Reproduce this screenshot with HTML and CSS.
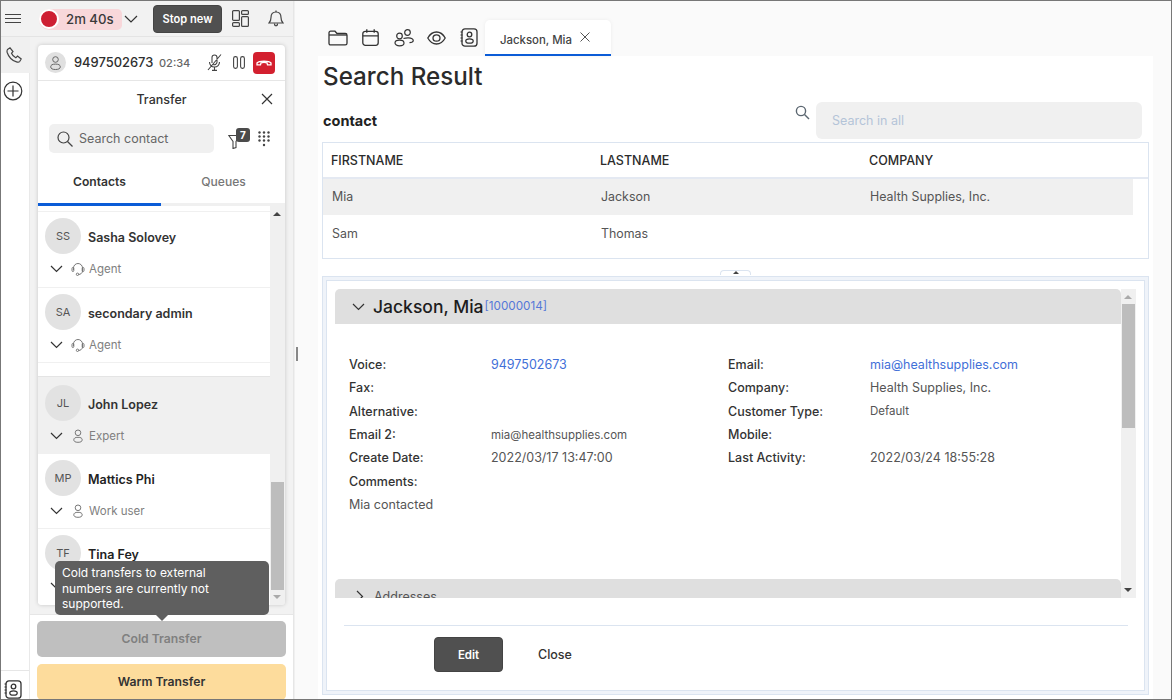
FILE: index.html
```html
<!DOCTYPE html>
<html lang="en">
<head>
<meta charset="utf-8">
<title>Transfer</title>
<link rel="stylesheet" href="styles.css">
</head>
<body>
<div class="app">
  <aside class="left">
    <header class="topbar">
      <svg class="ic-menu" width="16" height="9" viewBox="0 0 16 9"><path d="M0 .5h16M0 4.500h16M0 8.500h16" stroke="#444" fill="none"/></svg>
      <div class="timer"><span class="dot"></span><span class="timer-text">2m 40s</span></div>
      <svg class="ic-chev-top" width="14" height="8" viewBox="0 0 14 8"><path d="M1 1l6 6 6-6" stroke="#333" stroke-width="1.200" fill="none"/></svg>
      <button class="stop">Stop new</button>
      <svg class="ic-layout" width="17" height="17" viewBox="0 0 17 17" fill="none" stroke="#444" stroke-width="1.200"><rect x=".6" y=".6" width="6.800" height="9.800" rx="1"/><rect x=".6" y="12.600" width="6.800" height="3.800" rx="1"/><rect x="9.600" y=".6" width="6.800" height="3.800" rx="1"/><rect x="9.600" y="6.600" width="6.800" height="9.800" rx="1"/></svg>
      <svg class="ic-bell" width="16" height="17" viewBox="0 0 16 17" fill="none" stroke="#444" stroke-width="1.200"><path d="M1 13c1.500-1.500 2-2.500 2-5.500C3 4 5 2 8 2s5 2 5 5.500c0 3 .5 4 2 5.500z"/><path d="M6.500 13.500c0 3 3 3 3 0M8 .5v1.500"/></svg>
    </header>
    <div class="left-body">
      <nav class="rail">
        <div class="rail-phone"><svg width="16" height="16" viewBox="0 0 16 16" fill="none" stroke="#444" stroke-width="1.200"><path d="M1.500 2.500L4 .8l3 3.700-1.500 1.800c.7 1.800 2.200 3.500 4.300 4.500L11.500 9l3.700 3-1.500 2.500c-.6.800-2 .8-3.200.4C6 13.500 2.500 9.500 1.200 5.500c-.3-1.200-.2-2.300.3-3z"/></svg></div>
        <svg class="rail-plus" width="20" height="20" viewBox="0 0 20 20" fill="none" stroke="#333" stroke-width="1.200"><circle cx="10" cy="10" r="8.800"/><path d="M10 4.500v11M4.500 10h11"/></svg>
        <div class="rail-bottom"><svg width="18" height="19" viewBox="0 0 18 19" fill="none" stroke="#333" stroke-width="1.300"><rect x="2" y=".8" width="15" height="17.400" rx="3"/><circle cx="9.500" cy="6.500" r="2.300"/><ellipse cx="9.500" cy="13" rx="3.700" ry="2.200"/><path d="M.5 4h2M.5 7h2M.5 10h2M.5 13h2" stroke-width="1"/></svg></div>
      </nav>
      <section class="panel">
        <div class="card">
          <div class="call">
            <span class="call-avatar"><svg width="11" height="14" viewBox="0 0 11 14" fill="none" stroke="#666" stroke-width="1"><circle cx="5.500" cy="3.500" r="2.800"/><ellipse cx="5.500" cy="10.800" rx="4.800" ry="2.700"/></svg></span>
            <span class="call-num">9497502673</span>
            <span class="call-time">02:34</span>
            <svg class="ic-mic" width="15" height="17" viewBox="0 0 15 17" fill="none" stroke="#444" stroke-width="1.100"><path d="M5 9V3.500a2.500 2.500 0 0 1 5 0V8c0 2-2 3.200-3.800 2.500M2.500 8c0 3 2 5 5 5s5-2 5-5M7.500 13v3M5 16.400h5M14 .5L1 16"/></svg>
            <svg class="ic-pause" width="12" height="13" viewBox="0 0 12 13" fill="none" stroke="#444" stroke-width="1.100"><rect x=".6" y=".6" width="3.800" height="11.800" rx="1.800"/><rect x="7.600" y=".6" width="3.800" height="11.800" rx="1.800"/></svg>
            <button class="hangup"><svg width="16" height="7" viewBox="0 0 16 7" fill="none" stroke="#fff" stroke-width="1.300"><path d="M1 5.800V4C3 1.500 13 1.500 15 4v1.800h-3.500L11 3.800c-2-.5-4-.5-6 0l-.5 2z"/></svg></button>
          </div>
          <div class="transfer-head">
            <span class="transfer-title">Transfer</span>
            <svg class="ic-close" width="12" height="12" viewBox="0 0 12 12"><path d="M1 1l10 10M11 1L1 11" stroke="#333" stroke-width="1.200"/></svg>
          </div>
          <div class="search-row">
            <div class="search-contact">
              <svg width="16" height="16" viewBox="0 0 16 16" fill="none" stroke="#444" stroke-width="1.200"><circle cx="6.500" cy="6.500" r="5.500"/><path d="M10.500 10.500l5 5"/></svg>
              <span>Search contact</span>
            </div>
            <div class="filter">
              <svg width="15" height="15" viewBox="0 0 15 15" fill="none" stroke="#444" stroke-width="1.100"><path d="M.8 1.500h11L8 7.500v6l-3 1V7.500z"/></svg>
              <span class="badge">7</span>
            </div>
            <svg class="ic-dial" width="12" height="16" viewBox="0 0 12 16" fill="#444"><circle cx="1.500" cy="1.500" r="1.200"/><circle cx="6" cy="1.500" r="1.200"/><circle cx="10.500" cy="1.500" r="1.200"/><circle cx="1.500" cy="5.500" r="1.200"/><circle cx="6" cy="5.500" r="1.200"/><circle cx="10.500" cy="5.500" r="1.200"/><circle cx="1.500" cy="9.500" r="1.200"/><circle cx="6" cy="9.500" r="1.200"/><circle cx="10.500" cy="9.500" r="1.200"/><circle cx="6" cy="14" r="1.200"/></svg>
          </div>
          <div class="tabs">
            <div class="tab tab-on">Contacts</div>
            <div class="tab">Queues</div>
          </div>
          <div class="list-wrap">
            <div class="list">
              <div class="item"><div class="item-top"><span class="avatar">SS</span><span class="name">Sasha Solovey</span></div><div class="item-sub"><svg class="chev" width="13" height="8" viewBox="0 0 13 8"><path d="M1 1l5.500 5.500L12 1" stroke="#333" stroke-width="1.200" fill="none"/></svg><svg class="role" width="14" height="14" viewBox="0 0 14 14" fill="none" stroke="#777"><path d="M2.500 8V6a4.500 4.500 0 0 1 9 0v3c0 2-2 3.500-4 3.500"/><rect x="1" y="5.500" width="1.800" height="4" rx=".9"/><rect x="11.200" y="5.500" width="1.800" height="4" rx=".9"/><circle cx="6.500" cy="12.300" r="1.200"/></svg><span>Agent</span></div></div>
              <div class="item"><div class="item-top"><span class="avatar">SA</span><span class="name">secondary admin</span></div><div class="item-sub"><svg class="chev" width="13" height="8" viewBox="0 0 13 8"><path d="M1 1l5.500 5.500L12 1" stroke="#333" stroke-width="1.200" fill="none"/></svg><svg class="role" width="14" height="14" viewBox="0 0 14 14" fill="none" stroke="#777"><path d="M2.500 8V6a4.500 4.500 0 0 1 9 0v3c0 2-2 3.500-4 3.500"/><rect x="1" y="5.500" width="1.800" height="4" rx=".9"/><rect x="11.200" y="5.500" width="1.800" height="4" rx=".9"/><circle cx="6.500" cy="12.300" r="1.200"/></svg><span>Agent</span></div></div>
              <div class="list-gap"></div>
              <div class="item item-hover"><div class="item-top"><span class="avatar">JL</span><span class="name">John Lopez</span></div><div class="item-sub"><svg class="chev" width="13" height="8" viewBox="0 0 13 8"><path d="M1 1l5.500 5.500L12 1" stroke="#333" stroke-width="1.200" fill="none"/></svg><svg class="role" width="14" height="14" viewBox="0 0 14 14" fill="none" stroke="#777"><circle cx="7" cy="3.800" r="2.800"/><ellipse cx="7" cy="10.800" rx="4.200" ry="2.500"/></svg><span>Expert</span></div></div>
              <div class="item"><div class="item-top"><span class="avatar">MP</span><span class="name name-dark">Mattics Phi</span></div><div class="item-sub"><svg class="chev" width="13" height="8" viewBox="0 0 13 8"><path d="M1 1l5.500 5.500L12 1" stroke="#333" stroke-width="1.200" fill="none"/></svg><svg class="role" width="14" height="14" viewBox="0 0 14 14" fill="none" stroke="#777"><circle cx="7" cy="3.800" r="2.800"/><ellipse cx="7" cy="10.800" rx="4.200" ry="2.500"/></svg><span>Work user</span></div></div>
              <div class="item"><div class="item-top"><span class="avatar">TF</span><span class="name name-dark">Tina Fey</span></div><div class="item-sub"><svg class="chev" width="13" height="8" viewBox="0 0 13 8"><path d="M1 1l5.500 5.500L12 1" stroke="#333" stroke-width="1.200" fill="none"/></svg></div></div>
            </div>
            <div class="scroll list-scroll">
              <span class="arrow-up"></span>
              <span class="thumb thumb-list"></span>
              <span class="arrow-down arrow-dim"></span>
            </div>
          </div>
        </div>
        <div class="actions">
          <div class="tooltip">Cold transfers to external numbers are currently not supported.</div>
          <button class="btn-cold">Cold Transfer</button>
          <button class="btn-warm">Warm Transfer</button>
        </div>
      </section>
    </div>
    <span class="grip"></span>
  </aside>
  <main class="main">
    <div class="tabbar">
      <svg class="tb tb-folder" width="20" height="16" viewBox="0 0 20 16" fill="none" stroke="#333" stroke-width="1.300"><path d="M1 3c0-1 .7-1.800 1.700-1.800h4.300l2 2.300h8.300c1 0 1.700.7 1.700 1.700v8c0 1-.7 1.700-1.700 1.700H2.700C1.700 15 1 14.300 1 13.300z"/><path d="M1 5h18"/></svg>
      <svg class="tb tb-cal" width="17" height="17" viewBox="0 0 17 17" fill="none" stroke="#333" stroke-width="1.300"><rect x=".8" y="2.300" width="15.400" height="14" rx="2.500"/><path d="M.8 6.800h15.400M4.800 .3v3.500M12.200 .3v3.500"/></svg>
      <svg class="tb tb-people" width="20" height="18" viewBox="0 0 20 18" fill="none" stroke="#333" stroke-width="1.200"><circle cx="5.500" cy="7" r="2.800"/><ellipse cx="5.500" cy="14" rx="4.500" ry="2.800"/><circle cx="13.500" cy="3.500" r="2.800"/><path d="M9.500 9.500c1.500-.5 3-.8 5-.7 3 .2 5 1.500 4.700 3-.2 1-1.700 1.700-3.700 1.800"/></svg>
      <svg class="tb tb-eye" width="19" height="14" viewBox="0 0 19 14" fill="none" stroke="#333" stroke-width="1.300"><path d="M.8 7C3 3 6 1 9.500 1s6.500 2 8.700 6c-2.200 4-5.200 6-8.700 6S3 11 .8 7z"/><ellipse cx="9.500" cy="7" rx="3.500" ry="3.200"/></svg>
      <svg class="tb tb-book" width="18" height="19" viewBox="0 0 18 19" fill="none" stroke="#333" stroke-width="1.300"><rect x="2" y=".8" width="15" height="17.400" rx="3"/><circle cx="9.500" cy="6.500" r="2.300"/><ellipse cx="9.500" cy="13" rx="3.700" ry="2.200"/><path d="M.5 4h2M.5 7h2M.5 10h2M.5 13h2" stroke-width="1"/></svg>
      <div class="doc-tab"><span>Jackson, Mia</span><svg width="10" height="10" viewBox="0 0 10 10"><path d="M.5.500l9 9M9.500.500l-9 9" stroke="#555"/></svg></div>
    </div>
    <div class="content">
      <h1 class="title">Search Result</h1>
      <div class="contact-row">
        <h2 class="contact-label">contact</h2>
        <svg class="ic-search" width="15" height="15" viewBox="0 0 15 15" fill="none" stroke="#5b6670" stroke-width="1.400"><circle cx="6" cy="6" r="4.600"/><path d="M9.500 9.500l4.500 4.500"/></svg>
        <div class="search-all">Search in all</div>
      </div>
      <div class="table">
        <div class="thead"><span>FIRSTNAME</span><span>LASTNAME</span><span>COMPANY</span></div>
        <div class="trow trow-on"><span>Mia</span><span>Jackson</span><span>Health Supplies, Inc.</span></div>
        <div class="trow"><span>Sam</span><span>Thomas</span><span></span></div>
      </div>
      <div class="splitter"><span class="split-handle"><i></i></span></div>
      <div class="detail-outer">
        <div class="detail-inner">
          <div class="detail-scrollwrap">
            <div class="detail-body">
              <div class="sec-head">
                <svg width="13" height="8" viewBox="0 0 13 8"><path d="M1 1l5.500 5.500L12 1" stroke="#333" stroke-width="1.200" fill="none"/></svg>
                <span class="sec-name">Jackson, Mia</span><span class="sec-id">[10000014]</span>
              </div>
              <div class="fields">
                <b>Voice:</b><a class="link">9497502673</a><b>Email:</b><a class="link">mia@healthsupplies.com</a>
                <b>Fax:</b><span></span><b>Company:</b><span>Health Supplies, Inc.</span>
                <b>Alternative:</b><span></span><b>Customer Type:</b><span class="small">Default</span>
                <b>Email 2:</b><span class="small">mia@healthsupplies.com</span><b>Mobile:</b><span></span>
                <b>Create Date:</b><span>2022/03/17 13:47:00</span><b>Last Activity:</b><span>2022/03/24 18:55:28</span>
                <b>Comments:</b><span></span><span></span><span></span>
                <span class="comment">Mia contacted</span>
              </div>
              <div class="sec-sub">
                <svg width="8" height="13" viewBox="0 0 8 13"><path d="M1 1l5.500 5.500L1 12" stroke="#333" stroke-width="1.200" fill="none"/></svg>
                <span>Addresses</span>
              </div>
            </div>
            <div class="scroll detail-scroll">
              <span class="arrow-up arrow-dim"></span>
              <span class="thumb thumb-detail"></span>
              <span class="arrow-down"></span>
            </div>
          </div>
          <div class="footer">
            <button class="btn-edit">Edit</button>
            <button class="btn-close">Close</button>
          </div>
        </div>
      </div>
    </div>
  </main>
</div>
</body>
</html>
```
FILE: styles.css
```css
* { box-sizing: border-box; }
html, body { margin: 0; padding: 0; }
body { width: 1172px; height: 700px; overflow: hidden; font-family: Inter, "Liberation Sans", sans-serif; color: #333; }
button { font-family: inherit; border: 0; padding: 0; }
h1, h2 { margin: 0; }
svg { display: block; flex: none; }

.app { display: flex; width: 1172px; height: 700px; border: 1px solid #777; background: #fafafa; overflow: hidden; }

.left { position: relative; width: 293px; flex: none; display: flex; flex-direction: column; border-right: 1px solid #e6e6e6; }
.topbar { height: 36px; flex: none; display: flex; align-items: center; background: #f2f2f2; border-bottom: 1px solid #e4e4e4; padding-left: 4px; }
.ic-menu { margin-top: -1px; }
.timer { display: flex; align-items: center; margin-left: 18px; width: 83px; height: 21px; border-radius: 11px 5px 5px 11px; background: #f8d7da; margin-top: 1px; }
.dot { width: 20px; height: 20px; border-radius: 50%; background: #ce1f33; border: 2.500px solid #fff; flex: none; }
.timer-text { margin-left: 7px; font-size: 13.200px; font-weight: 500; color: #3a3a3a; }
.ic-chev-top { margin-left: 2px; }
.stop { margin-left: 15px; width: 69px; height: 28px; background: #505050; color: #fff; font-size: 11.100px; font-weight: 600; border-radius: 4px; border: 1px solid #444; }
.ic-layout { margin-left: 10px; }
.ic-bell { margin-left: 19px; }

.left-body { flex: 1; display: flex; min-height: 0; }
.rail { width: 29px; flex: none; background: #fff; display: flex; flex-direction: column; border-right: 1px solid #e9e9e9; }
.rail-phone { height: 36px; background: #f0f0f0; display: flex; align-items: center; justify-content: center; margin-right: -1px; padding-right: 3px; }
.rail-plus { margin: 8px 0 0 2px; }
.rail-bottom { margin-top: auto; height: 29px; border-top: 1px solid #e6e6e6; padding: 9px 0 0 3px; }

.panel { flex: 1; min-width: 0; display: flex; flex-direction: column; background: #f2f2f2; }
.card { width: 247px; height: 560px; flex: none; margin: 8px 0 0 8px; background: #fff; border-radius: 4px; box-shadow: 0 0 4px rgba(0,0,0,.18); display: flex; flex-direction: column; overflow: hidden; }
.call { height: 36px; flex: none; display: flex; align-items: center; border-bottom: 1px solid #e6e6e6; padding-left: 7px; }
.call-avatar { width: 21px; height: 21px; border-radius: 50%; background: #e0e0e0; display: flex; align-items: center; justify-content: center; flex: none; }
.call-num { margin-left: 8px; font-size: 12.900px; font-weight: 500; color: #2f2f2f; width: 78px; white-space: nowrap; }
.call-time { margin-left: 7px; font-size: 11px; font-weight: 500; color: #666; width: 31px; }
.ic-mic { margin-left: 17px; }
.ic-pause { margin-left: 11px; }
.hangup { margin-left: 8px; width: 22px; height: 22px; background: #d3202f; border-radius: 4px; display: flex; align-items: center; justify-content: center; }
.transfer-head { height: 36px; flex: none; position: relative; display: flex; align-items: center; justify-content: center; }
.transfer-title { font-size: 12.500px; font-weight: 500; color: #333; }
.ic-close { position: absolute; right: 12px; top: 12px; }
.search-row { flex: none; display: flex; align-items: center; height: 29px; margin-top: 7px; padding-left: 11px; }
.search-contact { width: 165px; height: 29px; background: #f0f0f0; border-radius: 5px; display: flex; align-items: center; padding-left: 8px; gap: 6px; font-size: 12.500px; color: #666; }
.filter { position: relative; margin-left: 14px; width: 24px; height: 24px; padding-top: 7px; }
.badge { position: absolute; left: 8px; top: 1px; width: 14px; height: 14px; background: #4b4b4b; color: #fff; border-radius: 3px; font-size: 10px; font-weight: 700; text-align: center; line-height: 14px; }
.ic-dial { margin-left: 6px; }
.tabs { flex: none; display: flex; height: 46px; margin-top: 7px; background: linear-gradient(#fff 43px, #f0f0f0 43px); }
.tab { width: 123px; height: 46px; display: flex; align-items: center; justify-content: center; font-size: 12.100px; font-weight: 500; color: #777; padding-bottom: 4px; }
.tab:last-child { padding-left: 2px; }
.tab-on { color: #333; font-weight: 600; border-bottom: 3px solid #0b5cd7; padding-bottom: 1px; }
.list-wrap { flex: 1; min-height: 0; display: flex; background: #f0f0f0; }
.list { width: 232px; flex: none; overflow: hidden; background: #fff; border-top: 5px solid #fff; }
.item { height: 76px; background: #fff; border-top: 1px solid #f0f0f0; padding: 6px 0 0 7px; }
.item + .item { height: 75px; }
.item-top { display: flex; align-items: center; height: 36px; }
.avatar { width: 36px; height: 36px; border-radius: 50%; background: #e2e2e2; display: flex; align-items: center; justify-content: center; font-size: 11px; color: #555; flex: none; padding-bottom: 1px; }
.name { margin-left: 7px; padding-top: 2px; font-size: 12.500px; font-weight: 600; color: #333; }
.name-dark { color: #222; }
.item-sub { display: flex; align-items: center; height: 14px; margin-top: 8px; padding-left: 5px; font-size: 11.500px; color: #808080; }
.role { margin-left: 8px; margin-right: 4px; }
.list-gap { height: 14px; background: #fff; border-top: 1px solid #f0f0f0; }
.list-gap + .item { background: #f0f0f0; height: 77px; padding-top: 8px; border-top: 1px solid #e4e4e4; }
.scroll { position: relative; background: #f0f0f0; }
.list-scroll { flex: 1; }
.arrow-up, .arrow-down { position: absolute; left: 3px; width: 0; height: 0; border-left: 4px solid transparent; border-right: 4px solid transparent; }
.arrow-up { top: 6px; border-bottom: 4px solid #444; }
.arrow-down { bottom: 6px; border-top: 4px solid #444; }
.arrow-dim.arrow-up { border-bottom-color: #aaa; }
.arrow-dim.arrow-down { border-top-color: #aaa; }
.thumb { position: absolute; left: 1px; right: 1px; background: #bdbdbd; }
.thumb-list { top: 276px; height: 108px; }

.actions { flex: 1; min-height: 0; position: relative; margin-top: 9px; background: #fff; border-top: 1px solid #e6e6e6; padding: 6px 7px 0 7px; }
.tooltip { position: absolute; left: 25px; top: -54px; width: 214px; height: 54px; padding: 4px 40px 0 7px; background: #5f5f5f; color: #fff; border-radius: 5px; font-size: 12px; line-height: 15.500px; }
.tooltip::after { content: ""; position: absolute; left: 101px; bottom: -6px; border-left: 6px solid transparent; border-right: 6px solid transparent; border-top: 6px solid #5f5f5f; }
.btn-cold, .btn-warm { display: block; width: 249px; border-radius: 5px; font-size: 12.200px; font-weight: 600; padding-bottom: 2px; }
.btn-cold { height: 36px; background: #bfbfbf; color: #808080; }
.btn-warm { height: 36px; margin-top: 7px; background: #fddc9c; color: #333; }
.grip { position: absolute; left: 295px; top: 346px; width: 2px; height: 14px; background: #888; }

.main { flex: 1; min-width: 0; display: flex; flex-direction: column; padding: 19px 18px 0 23px; border-left: 1px solid #f0f0f0; }
.tabbar { height: 36px; flex: none; display: flex; align-items: center; padding-left: 10px; position: relative; z-index: 1; }
.tb-folder { margin-top: -1px; }
.tb-cal { margin-left: 14px; margin-top: -1px; }
.tb-people { margin-left: 15px; margin-top: -1px; }
.tb-eye { margin-left: 13px; margin-top: -1px; }
.tb-book { margin-left: 14px; margin-top: -2px; }
.doc-tab { margin-left: 7px; width: 126px; height: 36px; background: #fff; border-radius: 5px 5px 0 0; border-bottom: 2px solid #0b5cd7; box-shadow: 0 0 4px rgba(0,0,0,.06); display: flex; align-items: center; padding: 6px 0 0 15px; font-size: 11.400px; font-weight: 500; color: #444; }
.doc-tab svg { margin: -7px 0 0 8px; }
.content { flex: 1; min-height: 0; background: #fff; padding: 0 4px; }
.title { font-size: 24.200px; font-weight: 500; line-height: 42px; color: #2b2b2b; height: 46px; padding-left: 1px; }
.contact-row { display: flex; align-items: center; height: 37px; }
.contact-label { font-size: 14.500px; font-weight: 700; color: #222; padding-left: 1px; }
.ic-search { margin-left: auto; margin-right: 6px; margin-top: -17px; }
.search-all { width: 326px; height: 37px; background: #f0f0f0; border-radius: 6px; margin-right: 7px; padding: 11px 16px; font-size: 12.500px; color: #b4c4d8; }
.table { height: 117px; margin-top: 3px; border: 1px solid #dbe4f0; }
.thead, .trow { display: grid; grid-template-columns: 269px 269px 1fr; align-items: center; }
.thead { height: 36px; border-bottom: 2px solid #e4e9f2; padding-left: 8px; font-size: 12.500px; font-weight: 500; color: #2b2b2b; }
.trow { height: 36px; width: 810px; padding-left: 9px; font-size: 12.400px; color: #555; }
.trow-on { background: #f0f0f0; padding-bottom: 1px; }
.splitter { height: 17px; position: relative; }
.split-handle { position: absolute; left: 398px; top: 11px; width: 31px; height: 5px; border: 1px solid #dbe4f0; border-bottom: 0; border-radius: 4px 4px 0 0; background: #fff; }
.split-handle i { position: absolute; left: 12px; top: 0; border-left: 3px solid transparent; border-right: 3px solid transparent; border-bottom: 3px solid #444; }
.detail-outer { height: 419px; border: 1px solid #dbe4f0; padding: 3px; background: #eff3f9; }
.detail-inner { height: 100%; background: #fff; border: 1px solid #dbe4f0; padding: 8px 0 0 8px; }
.detail-scrollwrap { display: flex; height: 309px; width: 801px; }
.detail-body { width: 786px; flex: none; overflow: hidden; }
.sec-head { height: 35px; background: #dfdfdf; border-radius: 5px 5px 0 0; display: flex; align-items: center; padding-left: 17px; }
.sec-name { margin-left: 8px; font-size: 17.500px; font-weight: 500; color: #1d1d1d; }
.sec-id { margin-left: 1px; font-size: 11.700px; color: #5578d8; margin-top: -2px; }
.fields { display: grid; grid-template-columns: 142px 237px 142px 1fr; grid-auto-rows: 23.300px; align-items: center; padding: 29px 0 0 14px; height: 255px; font-size: 12.500px; color: #555; }
.fields b { font-weight: 500; color: #333; }
.fields .link { color: #3f6fd8; }
.fields .small { font-size: 11.500px; }
.comment { grid-column: 1 / -1; }
.sec-sub { height: 34px; background: #dfdfdf; border-radius: 5px 5px 0 0; display: flex; align-items: center; padding-left: 21px; gap: 10px; font-size: 12.500px; color: #555; }
.detail-scroll { flex: 1; }
.thumb-detail { top: 15px; height: 124px; }
.footer { width: 784px; margin: 27px 0 0 9px; border-top: 1px solid #dbe4f0; display: flex; align-items: center; padding: 11px 0 0 90px; }
.btn-edit { width: 69px; height: 35px; background: #505050; color: #fff; border: 1px solid #444; border-radius: 4px; font-size: 11.500px; font-weight: 600; }
.btn-close { margin-left: 35px; background: none; font-size: 12.500px; font-weight: 500; color: #333; }
```
